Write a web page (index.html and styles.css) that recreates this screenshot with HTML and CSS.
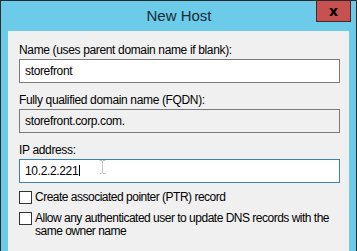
FILE: index.html
```html
<!DOCTYPE html>
<html lang="en">
<head>
    <meta charset="UTF-8">
    <title>New Host</title>
    <link rel="stylesheet" href="styles.css">
</head>
<body>

    <div class="window">
        <div class="title-bar">
            <span></span>
            <div class="title">New Host</div>
            <div class="controls">
                <button class="close-btn">x</button>
            </div>
        </div>

        <div class="panel">
            <div class="field">
                <div class="label">Name (uses parent domain name if blank):</div>
                <div class="textbox">storefront</div>
            </div>

            <div class="field">
                <div class="label">Fully qualified domain name (FQDN):</div>
                <div class="textbox readonly">storefront.corp.com.</div>
            </div>

            <div class="field">
                <div class="label">IP address:</div>
                <div class="textbox focused">10.2.2.221<span class="caret"></span>
                    <!-- mouse I-beam over the field -->
                    <svg class="ibeam" width="7" height="14" viewBox="0 0 7 14">
                        <path d="M0.5 0.5h2.5M4 0.5h2.5M3.5 1v12M0.5 13.5h2.5M4 13.5h2.5" stroke="#c8c8c8" fill="none"/>
                    </svg>
                </div>
            </div>

            <div class="checks">
                <label class="check">
                    <span class="box"></span>
                    <span class="check-text">Create associated pointer (PTR) record</span>
                </label>
                <label class="check">
                    <span class="box"></span>
                    <span class="check-text">Allow any authenticated user to update DNS records with the same owner name</span>
                </label>
            </div>
        </div>
    </div>

</body>
</html>
```

FILE: styles.css
```css
/* Page reset */
body {
    margin: 0;
    padding: 0;
    font-family: "Liberation Sans", Arial, sans-serif;
    background-color: #2b2b2b;
}

/* Dialog window frame */
.window {
    height: 250px;
    width: 341px;
    border-top: 1px solid #2b2b2b;
    border-left: 1px solid #2b2b2b;
    background-color: #6ccbe9;
    display: flex;
    flex-direction: column;
    padding: 0 7px;
    overflow: hidden;
}

/* Title bar */
.title-bar {
    height: 30px;
    display: grid;
    grid-template-columns: 1fr auto 1fr;
    align-items: start;
    margin: 0 -7px;
}

.title {
    font-size: 15px;
    color: #1b2a35;
    line-height: 30px;
    padding-left: 1px;
}

.controls {
    display: flex;
    justify-content: flex-end;
    padding-right: 5px;
    margin-top: -1px;
}

.close-btn {
    width: 35px;
    height: 22px;
    background-color: #c75050;
    border: 1px solid #4a2626;
    padding: 0;
    font-family: "DejaVu Sans", sans-serif;
    font-weight: bold;
    font-size: 14px;
    line-height: 16px;
    color: #000;
}

/* Content area */
.panel {
    flex: 1;
    background-color: #f0f0f0;
    padding: 12px 9px 0 11px;
    font-size: 12px;
    letter-spacing: -0.35px;
    color: #000;
}

.field {
    margin-bottom: 10px;
}

.label {
    line-height: 14px;
    margin-bottom: 2px;
}

.textbox {
    position: relative;
    height: 22px;
    line-height: 22px;
    border: 1px solid #7a7a7a;
    background-color: #fff;
    padding-left: 5px;
}

.textbox.readonly {
    background-color: #f0f0f0;
}

.textbox.focused {
    border-color: #3c7fb1;
}

.caret {
    display: inline-block;
    width: 1px;
    height: 11px;
    background-color: #000;
    vertical-align: -1px;
    margin-left: 1px;
}

.ibeam {
    position: absolute;
    left: 79px;
    top: 0;
}

/* Checkboxes */
.checks {
    display: flex;
    flex-direction: column;
    gap: 8px;
    margin-top: -2px;
    letter-spacing: -0.5px;
}

.check {
    display: flex;
    align-items: flex-start;
    gap: 3px;
    line-height: 13px;
}

.box {
    flex: none;
    width: 11px;
    height: 11px;
    border: 1px solid #333;
    background-color: #fff;
}

.check-text {
    max-width: 306px;
}
```
